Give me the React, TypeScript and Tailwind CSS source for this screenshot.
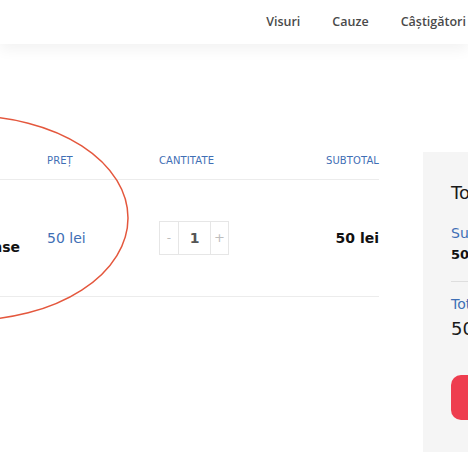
import React from 'react';

// cart page, cropped view with an annotation ellipse drawn over it

const navItems = ['Visuri', 'Cauze', 'Câștigători'];

function Header() {
    return (
        <header className="h-[44px] bg-white flex items-center justify-end pr-[2px] shadow-[0_6px_14px_rgba(0,0,0,0.05)] relative z-10">
            <nav className="flex items-center gap-[32px] text-[12.5px] font-semibold text-[#4a4a4a] font-['Open_Sans',sans-serif]">
                {navItems.map((item) => (
                    <a key={item} href="#" className="leading-none">{item}</a>
                ))}
            </nav>
        </header>
    );
}

function QuantityBox({ value }: { value: number }) {
    return (
        <div className="flex h-[34px] border border-[#e6e6e6] text-[#bdbdbd]">
            <button className="w-[18px] flex items-center justify-center text-[12px]">-</button>
            <div className="w-[33px] flex items-center justify-center border-x border-[#e6e6e6] text-[14px] font-bold text-[#555]">{value}</div>
            <button className="w-[17px] flex items-center justify-center text-[13px]">+</button>
        </div>
    );
}

function CartTable() {
    return (
        <div className="w-[379px] shrink-0 text-[#3f6fb5]">
            <div className="flex h-[38px] items-center border-b border-[#ececec] text-[10px] tracking-[0.01em] uppercase">
                <div className="w-[47px]" />
                <div className="w-[112px]">Preț</div>
                <div className="w-[120px]">Cantitate</div>
                <div className="flex-1 text-right">Subtotal</div>
            </div>
            <div className="flex h-[117px] items-center border-b border-[#ececec]">
                <div className="w-[47px] flex justify-end pr-[27px] mt-[18px]">
                    <span className="whitespace-nowrap text-[14px] font-bold text-[#111]">Pachet Vise Imense</span>
                </div>
                <div className="w-[112px] text-[14px]">50 lei</div>
                <div className="w-[120px]">
                    <div className="inline-flex">
                        <QuantityBox value={1} />
                    </div>
                </div>
                <div className="flex-1 text-right text-[14px] font-bold text-[#111]">50 lei</div>
            </div>
        </div>
    );
}

function Totals() {
    return (
        <aside className="mt-[10px] ml-[44px] w-[260px] h-[300px] shrink-0 bg-[#f5f5f5] pl-[28px] pt-[28px]">
            <h2 className="text-[18px] text-[#1a1a1a] leading-[26px] whitespace-nowrap">Totaluri coș</h2>
            <div className="mt-[18px] text-[14px] text-[#3f6fb5] leading-[18px] whitespace-nowrap">Subtotal</div>
            <div className="mt-[4px] text-[13px] font-bold text-[#111] leading-[18px] whitespace-nowrap">50 lei</div>
            <div className="mt-[17px] border-t border-[#dedede]" />
            <div className="mt-[13px] text-[14px] text-[#3f6fb5] leading-[18px] whitespace-nowrap">Total</div>
            <div className="mt-[3px] text-[18px] text-[#1a1a1a] leading-[26px] whitespace-nowrap">50 lei</div>
            <button className="mt-[33px] h-[45px] w-[220px] rounded-[10px] bg-[#ee3d4f] text-white text-[14px] font-semibold text-left pl-[20px] whitespace-nowrap">
                Finalizează comanda
            </button>
        </aside>
    );
}

export default function App() {
    return (
        <div className="relative w-[468px] h-[468px] overflow-hidden bg-white font-['DejaVu_Sans','Noto_Sans',sans-serif]">
            <Header />
            <main className="flex items-start pt-[98px]">
                <CartTable />
                <Totals />
            </main>
            <svg className="absolute left-0 top-0 pointer-events-none" width="468" height="468">
                <ellipse cx="-30" cy="218" rx="158" ry="102" fill="none" stroke="#e4573d" strokeWidth="1.5" />
            </svg>
        </div>
    );
}
